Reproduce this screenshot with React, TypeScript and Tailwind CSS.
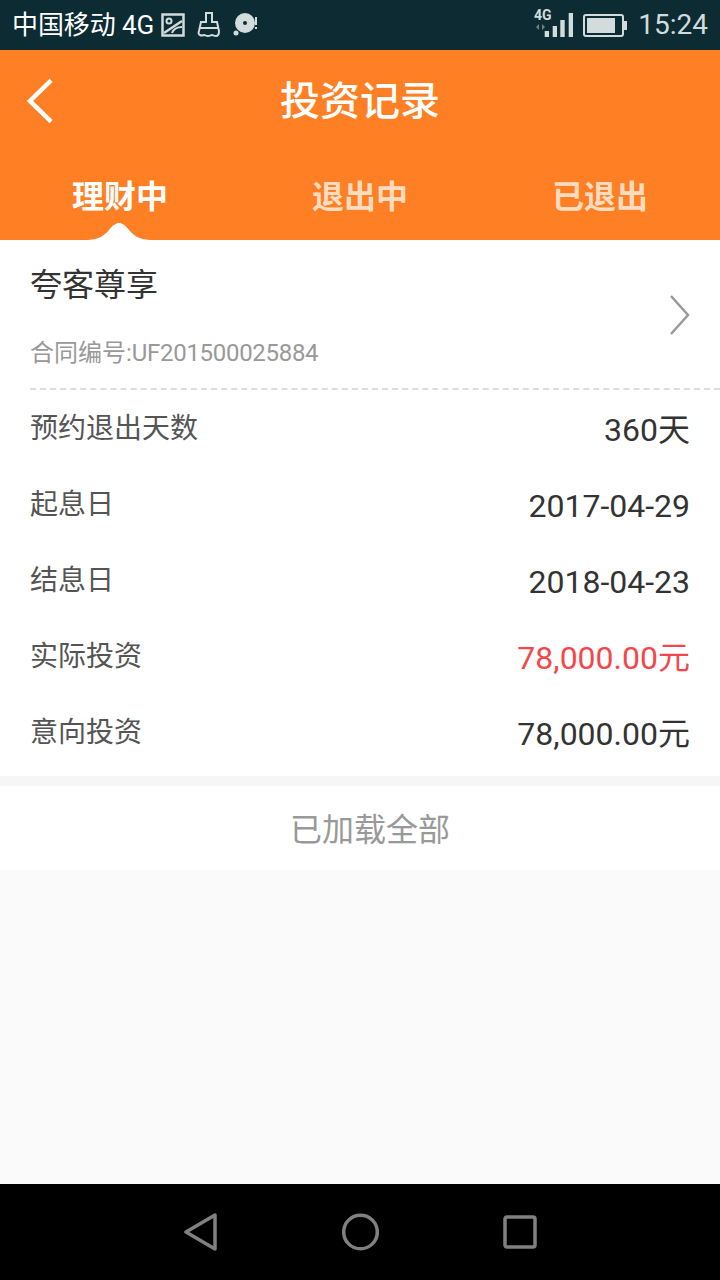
const cjk = "font-['Roboto','Noto_Sans_CJK_SC',sans-serif]";

function Row({ label, value, red, height }: { label: string; value: string; red?: boolean; height: string }) {
  return (
    <div className={`flex justify-between items-center pl-[30px] pr-[30px] ${height}`}>
      <span className="text-[28px] leading-[40px] text-[#555555] mt-[-2px]">{label}</span>
      <span className={`text-[32px] leading-[40px] ${red ? "text-[#f5474b]" : "text-[#333333]"}`}>{value}</span>
    </div>
  );
}

function StatusBar() {
  return (
    <div className="h-[50px] bg-[#0c2b33] flex items-center justify-between pl-[12px] pr-[12px] text-[#dfe6e6]">
      <div className="flex items-center">
        <span className="text-[26px] leading-[30px] text-white tracking-[-0.1px]">中国移动 4G</span>
        <svg width="24" height="24" viewBox="0 0 24 24" fill="none" stroke="#d3dcdc" strokeWidth="2.5" className="ml-[7px]">
          <rect x="1.5" y="1.5" width="21" height="21" />
          <circle cx="8" cy="8" r="2.5" strokeWidth="2" />
          <path d="M3 20 L21 8" />
          <path d="M11 20 C13 15 17 14 21 14" strokeWidth="2" />
        </svg>
        <svg width="24" height="26" viewBox="0 0 24 26" fill="none" stroke="#d3dcdc" strokeWidth="2" className="ml-[12px]">
          <path d="M9 1h6v9h5l2 9c0 3-1 5-3 5-2 0-3-1-4-1s-2 1-4 1c-2 0-3-1-4-1s-2 1-4 0c-1 0-2-2-1-4l2-9h5z" />
          <path d="M3 16h18" />
        </svg>
        <svg width="26" height="24" viewBox="0 0 26 24" className="ml-[12px]">
          <circle cx="12" cy="10" r="10" fill="#d3dcdc" />
          <circle cx="12" cy="10" r="2" fill="#0c2b33" />
          <circle cx="3" cy="20" r="2.5" fill="#d3dcdc" />
          <rect x="22" y="4" width="2" height="8" fill="#d3dcdc" />
          <rect x="22" y="14" width="2" height="2" fill="#d3dcdc" />
        </svg>
      </div>
      <div className="flex items-center">
        <svg width="44" height="40" viewBox="0 0 44 40" fill="#d3dcdc">
          <text x="4" y="15" fontSize="14" fontWeight="700" fontFamily="Roboto">4G</text>
          <path d="M9 19l-3 3 3 3zM12 19l3 3-3 3z" opacity="0.5" />
          <rect x="14.7" y="26" width="4.3" height="6" />
          <rect x="22.7" y="21" width="4.3" height="11" />
          <rect x="30.3" y="15" width="4.4" height="17" />
          <rect x="38.7" y="8" width="4.3" height="24" />
        </svg>
        <div className="ml-[9px] flex items-center">
          <div className="w-[41px] h-[23px] border-2 border-[#d3dcdc] rounded-[3px] p-[2px]">
            <div className="w-[28px] h-full bg-[#d3dcdc]" />
          </div>
          <div className="w-[3px] h-[9px] bg-[#d3dcdc]" />
        </div>
        <span className="ml-[11px] text-[28px] leading-[32px] text-[#d3dcdc]">15:24</span>
      </div>
    </div>
  );
}

function Header() {
  return (
    <div className="h-[190px] bg-[#ff7f25] flex flex-col">
      <div className="h-[102px] relative flex items-center justify-center">
        <svg width="30" height="50" viewBox="0 0 30 50" fill="none" stroke="#ffffff" strokeWidth="4.5" strokeLinecap="square" className="absolute left-[25px] top-[28px]">
          <path d="M24.5 4 L5 23 L24.5 42" />
        </svg>
        <span className="text-[40px] leading-[48px] font-medium text-white mt-[2px]">投资记录</span>
      </div>
      <div className="flex-1 grid grid-cols-3">
        <div className="relative flex justify-center pt-[22px]">
          <span className="text-[32px] leading-[46px] font-bold text-white">理财中</span>
          <svg width="70" height="17" viewBox="0 0 70 17" fill="#ffffff" className="absolute bottom-0 left-[84px]">
            <path d="M0 17 C12 17 18 15 25 7 C29 2 32 0 35 0 C38 0 41 2 45 7 C52 15 58 17 70 17 Z" />
          </svg>
        </div>
        <div className="flex justify-center pt-[22px]">
          <span className="text-[32px] leading-[46px] font-bold text-[#ffdcc0]">退出中</span>
        </div>
        <div className="flex justify-center pt-[22px]">
          <span className="text-[32px] leading-[46px] font-bold text-[#ffdcc0]">已退出</span>
        </div>
      </div>
    </div>
  );
}

export default function App() {
  return (
    <div className={`w-[720px] h-[1280px] flex flex-col bg-[#fafafa] overflow-hidden ${cjk}`}>
      <StatusBar />
      <Header />
      <div className="bg-white h-[536px] flex flex-col">
        <div className="h-[150px] pl-[30px] flex flex-col relative">
          <div className="text-[32px] leading-[44px] text-[#333333] mt-[23px]">夸客尊享</div>
          <div className="text-[24px] leading-[32px] text-[#999999] mt-[30px]">
            合同编号:<span className="tracking-[-0.3px]">UF201500025884</span>
          </div>
          <svg width="24" height="40" viewBox="0 0 24 40" fill="none" stroke="#999999" strokeWidth="2.5" className="absolute right-[28px] top-[55px]">
            <path d="M3 1 L20 20 L3 39" />
          </svg>
          <div className="absolute left-[30px] right-0 bottom-0 border-b-2 border-dashed border-[#dddddd]" />
        </div>
        <Row label="预约退出天数" value="360天" height="h-[78px] pt-[2px]" />
        <Row label="起息日" value="2017-04-29" height="h-[76px]" />
        <Row label="结息日" value="2018-04-23" height="h-[76px]" />
        <Row label="实际投资" value="78,000.00元" red height="h-[76px]" />
        <Row label="意向投资" value="78,000.00元" height="h-[76px]" />
      </div>
      <div className="h-[10px] bg-[#f6f6f6]" />
      <div className="h-[84px] bg-white flex items-center justify-center pl-[20px]">
        <span className="text-[32px] leading-[44px] text-[#999999] mt-[4px]">已加载全部</span>
      </div>
      <div className="flex-1 bg-[#fafafa]" />
      <div className="h-[96px] bg-black flex items-center justify-center pl-[1px]">
        <svg width="36" height="40" viewBox="0 0 36 40" fill="none" stroke="#808080" strokeWidth="3.5" strokeLinejoin="round">
          <path d="M2 20 L31 3 V37 Z" />
        </svg>
        <svg width="37" height="38" viewBox="0 0 37 38" fill="none" stroke="#808080" strokeWidth="3.5" className="ml-[122px]">
          <circle cx="18.5" cy="19" r="16.8" />
        </svg>
        <svg width="34" height="34" viewBox="0 0 34 34" fill="none" stroke="#808080" strokeWidth="3.5" strokeLinejoin="round" className="ml-[124px]">
          <rect x="2" y="2" width="30" height="30" rx="2" />
        </svg>
      </div>
    </div>
  );
}
